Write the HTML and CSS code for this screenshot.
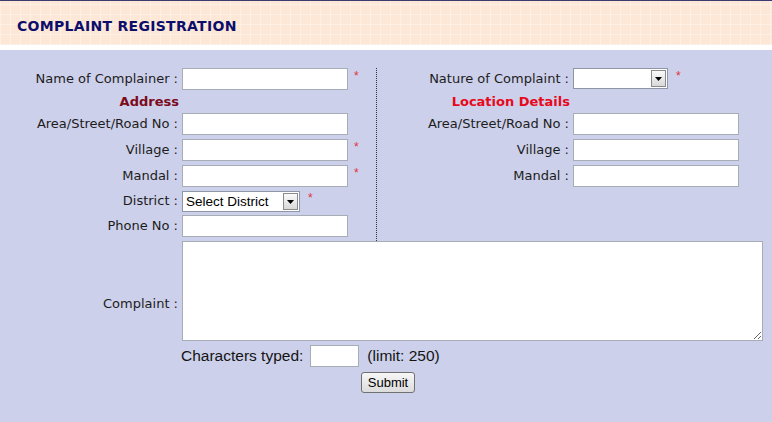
FILE: index.html
```html
<!DOCTYPE html>
<html>
<head>
<meta charset="utf-8">
<title>Complaint Registration</title>
<link rel="stylesheet" href="styles.css">
</head>
<body>
<header class="title-bar"><h1 class="title">COMPLAINT REGISTRATION</h1></header>
<main class="form-area">
  <div class="top">
    <div class="col col-left">
      <label class="label">Name of Complainer :</label>
      <div class="ctrl"><input class="field" type="text"><span class="req">*</span></div>
      <div class="section-title address">Address</div>
      <div></div>
      <label class="label">Area/Street/Road No :</label>
      <div class="ctrl"><input class="field" type="text"></div>
      <label class="label">Village :</label>
      <div class="ctrl"><input class="field" type="text"><span class="req">*</span></div>
      <label class="label">Mandal :</label>
      <div class="ctrl"><input class="field" type="text"><span class="req">*</span></div>
      <label class="label">District :</label>
      <div class="ctrl">
        <div class="select select-district">
          <select class="select-native"><option>Select District</option></select>
          <span class="select-btn"><svg width="7" height="4" viewBox="0 0 7 4"><path d="M0 0H7L3.5 4Z" fill="#000"/></svg></span>
        </div>
        <span class="req req-select">*</span>
      </div>
      <label class="label">Phone No :</label>
      <div class="ctrl"><input class="field" type="text"></div>
    </div>
    <div class="col col-right">
      <label class="label">Nature of Complaint :</label>
      <div class="ctrl">
        <div class="select select-nature">
          <select class="select-native"><option></option></select>
          <span class="select-btn"><svg width="7" height="4" viewBox="0 0 7 4"><path d="M0 0H7L3.5 4Z" fill="#000"/></svg></span>
        </div>
        <span class="req req-select">*</span>
      </div>
      <div class="section-title location">Location Details</div>
      <div></div>
      <label class="label">Area/Street/Road No :</label>
      <div class="ctrl"><input class="field" type="text"></div>
      <label class="label">Village :</label>
      <div class="ctrl"><input class="field" type="text"></div>
      <label class="label">Mandal :</label>
      <div class="ctrl"><input class="field" type="text"></div>
    </div>
  </div>
  <div class="complaint">
    <label class="label complaint-label">Complaint :</label>
    <textarea class="complaint-text"></textarea>
    <div class="counter">
      <span class="counter-text">Characters typed:</span>
      <input class="counter-field" type="text">
      <span>(limit: 250)</span>
    </div>
    <div class="submit-row"><button class="submit" type="button">Submit</button></div>
  </div>
</main>
</body>
</html>
```

FILE: styles.css
```css
html, body {
  margin: 0;
  padding: 0;
}

body {
  background: #ccd0ea;
  font-family: "DejaVu Sans", Verdana, sans-serif;
  font-size: 13px;
  color: #1c1c1c;
  width: 772px;
  height: 422px;
  overflow: hidden;
}

.title-bar {
  box-sizing: border-box;
  height: 50px;
  border-top: 1px solid #3b3b72;
  border-bottom: 5px solid #ffffff;
  background-color: #fde7d6;
  background-image:
    repeating-linear-gradient(90deg, rgba(255, 255, 255, 0.35) 0 1px, transparent 1px 10px),
    repeating-linear-gradient(0deg, rgba(255, 255, 255, 0.35) 0 1px, transparent 1px 10px);
  padding: 17px 0 0 17px;
}

.title {
  margin: 0;
  font-size: 14px;
  line-height: 16px;
  font-weight: bold;
  color: #0d0d6b;
  letter-spacing: 0.3px;
}

.form-area {
  padding-top: 18px;
}

.top {
  display: flex;
}

.col {
  display: grid;
  align-content: start;
}

.col-left {
  width: 376px;
  border-right: 1px dotted #333;
  grid-template-columns: 182px 1fr;
  grid-template-rows: 26px 19px 26px 26px 25px 25px 26px;
}

.col-right {
  grid-template-columns: 196px 1fr;
  grid-template-rows: 26px 19px 26px 26px 25px;
}

.label {
  text-align: right;
  padding-right: 4px;
  line-height: 22px;
  white-space: nowrap;
}

.section-title {
  text-align: right;
  padding-right: 3px;
  font-weight: bold;
  line-height: 15px;
  white-space: nowrap;
}

.address {
  color: #7c0a1c;
}

.location {
  color: #e8081c;
}

.ctrl {
  display: flex;
  align-items: flex-start;
}

.field {
  display: block;
  width: 166px;
  height: 22px;
  box-sizing: border-box;
  border: 1px solid #a7adb6;
  background: #fff;
  margin: 0;
  padding: 1px 3px;
  font: 13px "Liberation Sans", Arial, sans-serif;
}

.req {
  color: #e2303c;
  font-family: "Liberation Sans", Arial, sans-serif;
  font-size: 12px;
  line-height: 16px;
  padding-left: 6px;
}

.req-select {
  padding-left: 8px;
}

.select {
  display: flex;
  box-sizing: border-box;
  height: 21px;
  border: 1px solid #8d97a6;
  background: #fff;
  margin-top: 1px;
}

.select-district {
  width: 118px;
}

.select-nature {
  width: 95px;
  margin-top: 0;
}

.select-native {
  appearance: none;
  -webkit-appearance: none;
  flex: 1;
  min-width: 0;
  border: 0;
  outline: 0;
  background: transparent;
  margin: 0;
  padding: 0 0 0 3px;
  font: 13.5px "Liberation Sans", Arial, sans-serif;
  color: #000;
}

.select-btn {
  display: flex;
  align-items: center;
  justify-content: center;
  width: 15px;
  box-sizing: border-box;
  margin: 1px;
  border: 1px solid #8a8a8a;
  background: linear-gradient(#fafafa, #d8d8d8);
}

.complaint {
  display: grid;
  grid-template-columns: 182px 581px;
  grid-template-rows: auto auto auto;
}

.complaint-label {
  grid-row: 1 / 3;
  align-self: center;
}

.complaint-text {
  display: block;
  width: 581px;
  height: 100px;
  box-sizing: border-box;
  border: 1px solid #a7adb6;
  margin: 0;
  background: #fff;
  font: 13px "Liberation Sans", Arial, sans-serif;
}

.counter {
  grid-column: 2;
  display: flex;
  align-items: center;
  margin-top: 4px;
  height: 22px;
  font-family: "Liberation Sans", Arial, sans-serif;
  font-size: 15.5px;
  color: #141414;
}

.counter-text {
  margin-left: -1px;
}

.counter-field {
  display: block;
  width: 49px;
  height: 22px;
  box-sizing: border-box;
  border: 1px solid #a7adb6;
  background: #fff;
  margin: 0 8px 0 7px;
  padding: 0;
}

.submit-row {
  grid-column: 2;
  padding-top: 5px;
}

.submit {
  display: block;
  margin-left: 179px;
  width: 54px;
  height: 21px;
  padding: 0;
  border: 1px solid #707070;
  border-radius: 3px;
  background: linear-gradient(#f7f7f7, #dcdcdc);
  font: 13px "Liberation Sans", Arial, sans-serif;
  color: #000;
}
```
